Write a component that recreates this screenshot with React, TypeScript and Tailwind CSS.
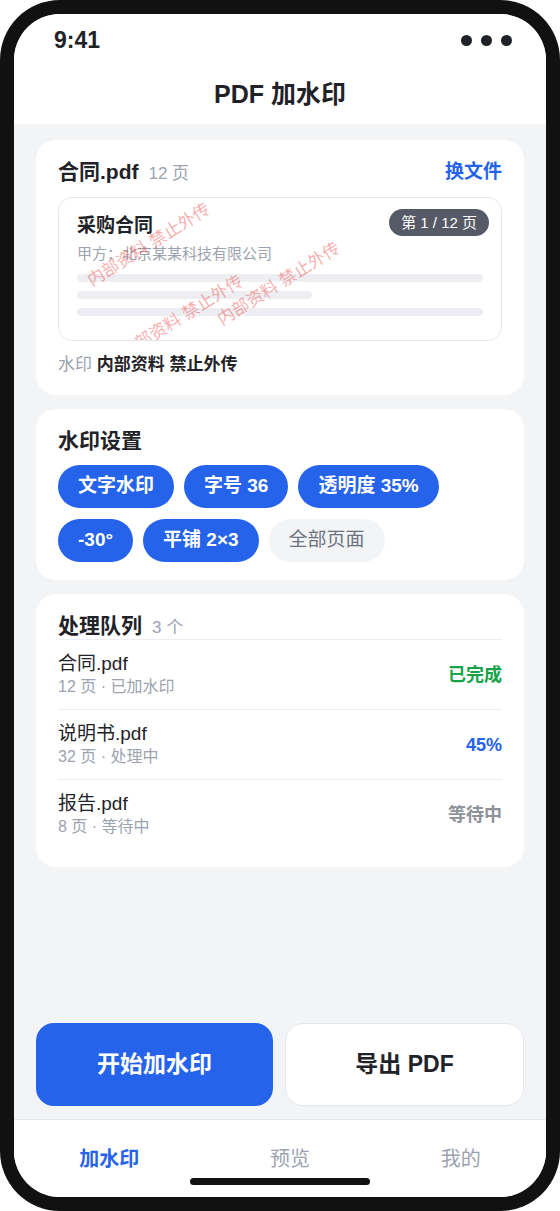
import React from 'react';

const font = { fontFamily: '"Liberation Sans", "Noto Sans CJK SC", sans-serif' };

const chips = [
  { label: '文字水印', on: true },
  { label: '字号 36', on: true },
  { label: '透明度 35%', on: true },
  { label: '-30°', on: true },
  { label: '平铺 2×3', on: true },
  { label: '全部页面', on: false },
];

const queue = [
  { name: '合同.pdf', sub: '12 页 · 已加水印', status: '已完成', color: 'text-[#16a34a]' },
  { name: '说明书.pdf', sub: '32 页 · 处理中', status: '45%', color: 'text-[#2563eb]' },
  { name: '报告.pdf', sub: '8 页 · 等待中', status: '等待中', color: 'text-[#8e9299]' },
];

const marks = [
  'left-[90px] top-[47px]',
  'left-[123px] top-[119px]',
  'left-[220px] top-[86px]',
];

export default function App() {
  return (
    <div className="w-[560px] h-[1211px] bg-white" style={font}>
      <div className="h-full rounded-[60px] bg-[#111] p-[14px]">
        <div className="h-full rounded-[46px] bg-[#f3f4f6] overflow-hidden flex flex-col">
          {/* status + title */}
          <div className="bg-white">
            <div className="h-[52px] flex items-center justify-between pl-[40px] pr-[34px]">
              <span className="text-[23px] font-bold text-[#1f2328]">9:41</span>
              <div className="flex gap-[9px]">
                <span className="w-[11px] h-[11px] rounded-full bg-[#1f2328]" />
                <span className="w-[11px] h-[11px] rounded-full bg-[#1f2328]" />
                <span className="w-[11px] h-[11px] rounded-full bg-[#1f2328]" />
              </div>
            </div>
            <div className="h-[58px] flex items-center justify-center">
              <h1 className="text-[25px] font-bold text-[#1f2328]">PDF 加水印</h1>
            </div>
          </div>

          <main className="flex-1 px-[22px] pt-[16px] flex flex-col gap-[14px]">
            {/* file card */}
            <section className="bg-white rounded-[20px] px-[22px] pt-[18px] pb-[18px]">
              <div className="flex items-center justify-between h-[28px]">
                <div className="flex items-baseline gap-[10px]">
                  <span className="text-[21px] font-bold text-[#1f2328]">合同.pdf</span>
                  <span className="text-[17px] text-[#9ca3af]">12 页</span>
                </div>
                <button className="text-[19px] font-bold text-[#2563eb]">换文件</button>
              </div>
              <div className="relative mt-[11px] border border-[#e5e7eb] rounded-[14px] overflow-hidden px-[18px] pt-[15px] pb-[24px]">
                <div className="text-[19px] leading-[26px] font-bold text-[#1f2328]">采购合同</div>
                <div className="mt-[4px] text-[15px] leading-[22px] text-[#9ca3af]">甲方：北京某某科技有限公司</div>
                <div className="mt-[9px] flex flex-col gap-[9px]">
                  <div className="h-[8px] rounded-full bg-[#eceef1]" />
                  <div className="h-[8px] w-[235px] rounded-full bg-[#eceef1]" />
                  <div className="h-[8px] rounded-full bg-[#eceef1]" />
                </div>
                <span className="absolute top-[11px] right-[12px] h-[27px] px-[12px] rounded-full bg-[#555a66] text-white text-[15px] leading-[27px]">
                  第 1 / 12 页
                </span>
                {marks.map((m) => (
                  <span
                    key={m}
                    className={`absolute ${m} -translate-x-1/2 -translate-y-1/2 -rotate-[32deg] whitespace-nowrap text-[17px] text-[#ef4444]/45 pointer-events-none`}
                  >
                    内部资料 禁止外传
                  </span>
                ))}
              </div>
              <div className="mt-[12px] text-[17px] leading-[24px]">
                <span className="text-[#9ca3af]">水印 </span>
                <span className="font-bold text-[#1f2328]">内部资料 禁止外传</span>
              </div>
            </section>

            {/* settings card */}
            <section className="bg-white rounded-[20px] px-[22px] pt-[18px] pb-[18px]">
              <h2 className="text-[21px] leading-[28px] font-bold text-[#1f2328]">水印设置</h2>
              <div className="mt-[10px] flex flex-wrap gap-x-[10px] gap-y-[11px] w-[400px]">
                {chips.map((c) => (
                  <span
                    key={c.label}
                    className={
                      c.on
                        ? 'h-[43px] px-[20px] rounded-full bg-[#2563eb] text-white text-[19px] font-bold flex items-center'
                        : 'h-[43px] px-[20px] rounded-full bg-[#f3f4f6] text-[#6b7280] text-[19px] flex items-center'
                    }
                  >
                    {c.label}
                  </span>
                ))}
              </div>
            </section>

            {/* queue card */}
            <section className="bg-white rounded-[20px] px-[22px] pt-[18px] pb-[17px]">
              <div className="flex items-baseline gap-[10px] h-[28px] border-b border-[#eceef1]">
                <h2 className="text-[21px] leading-[28px] font-bold text-[#1f2328]">处理队列</h2>
                <span className="text-[17px] text-[#9ca3af]">3 个</span>
              </div>
              {queue.map((q, i) => (
                <div
                  key={q.name}
                  className={`flex items-center justify-between pt-[12px] ${i < queue.length - 1 ? 'pb-[11px] border-b border-[#eceef1]' : 'pb-[12px]'}`}
                >
                  <div>
                    <div className="text-[19px] leading-[24px] text-[#1f2328]">{q.name}</div>
                    <div className="text-[16px] leading-[22px] text-[#9ca3af]">{q.sub}</div>
                  </div>
                  <span className={`text-[18px] font-bold ${q.color}`}>{q.status}</span>
                </div>
              ))}
            </section>
          </main>

          {/* action buttons */}
          <div className="px-[22px] pb-[13px] flex gap-[12px]">
            <button className="flex-1 h-[83px] rounded-[18px] bg-[#2563eb] text-white text-[23px] font-bold">
              开始加水印
            </button>
            <button className="flex-1 h-[83px] rounded-[18px] bg-white border border-[#e5e7eb] text-[#1f2328] text-[23px] font-bold">
              导出 PDF
            </button>
          </div>

          {/* tab bar */}
          <nav className="bg-white border-t border-[#e5e7eb] h-[78px] flex flex-col">
            <div className="flex justify-around pt-[24px]">
              <span className="text-[20px] font-bold text-[#2563eb]">加水印</span>
              <span className="text-[20px] text-[#9ca3af]">预览</span>
              <span className="text-[20px] text-[#9ca3af]">我的</span>
            </div>
            <div className="mx-auto mt-auto mb-[12px] w-[180px] h-[7px] rounded-full bg-[#111]" />
          </nav>
        </div>
      </div>
    </div>
  );
}
